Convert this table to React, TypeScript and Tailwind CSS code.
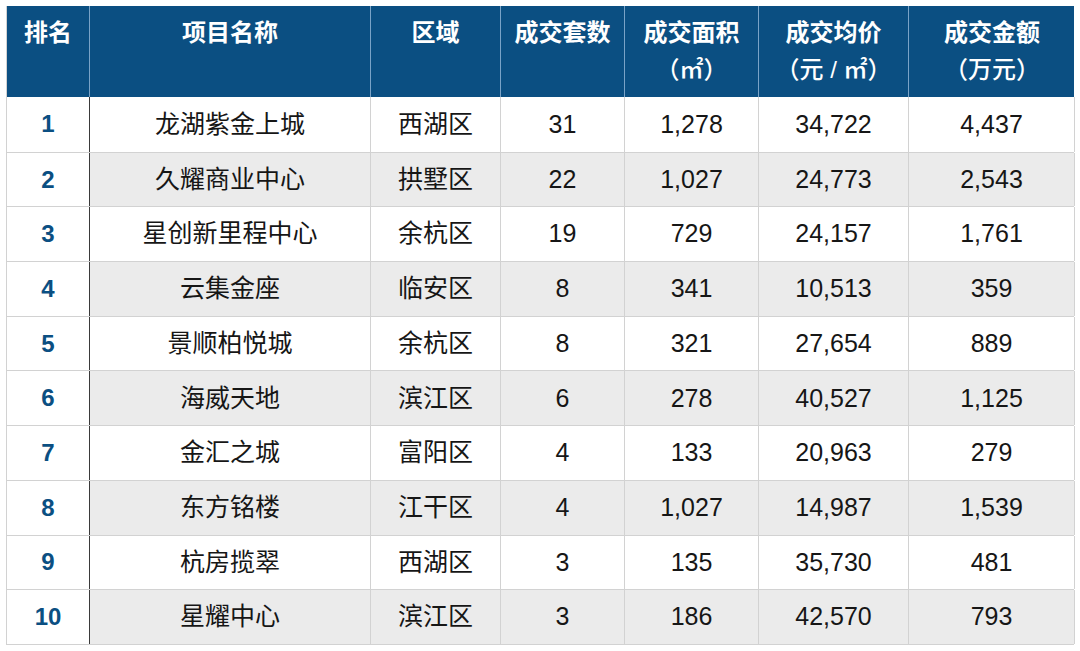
const cols = "grid grid-cols-[83px_281px_130px_124px_134px_150px_166px]";

const font = { fontFamily: '"Liberation Sans", "Noto Sans CJK SC", sans-serif' };

type Row = [string, string, string, string, string, string, string];

const rows: Row[] = [
  ["1", "龙湖紫金上城", "西湖区", "31", "1,278", "34,722", "4,437"],
  ["2", "久耀商业中心", "拱墅区", "22", "1,027", "24,773", "2,543"],
  ["3", "星创新里程中心", "余杭区", "19", "729", "24,157", "1,761"],
  ["4", "云集金座", "临安区", "8", "341", "10,513", "359"],
  ["5", "景顺柏悦城", "余杭区", "8", "321", "27,654", "889"],
  ["6", "海威天地", "滨江区", "6", "278", "40,527", "1,125"],
  ["7", "金汇之城", "富阳区", "4", "133", "20,963", "279"],
  ["8", "东方铭楼", "江干区", "4", "1,027", "14,987", "1,539"],
  ["9", "杭房揽翠", "西湖区", "3", "135", "35,730", "481"],
  ["10", "星耀中心", "滨江区", "3", "186", "42,570", "793"],
];

const headers: [string, string?][] = [
  ["排名"],
  ["项目名称"],
  ["区域"],
  ["成交套数"],
  ["成交面积", "（㎡）"],
  ["成交均价", "（元 / ㎡）"],
  ["成交金额", "（万元）"],
];

export default function App() {
  return (
    <div className="h-[651px] w-[1080px] bg-white pl-[6px] pt-[6px]" style={font}>
      <div className="w-[1068px] border-b border-l border-[#d2d2d2]">
        <div className={`${cols} h-[91px] bg-[#0b4f82]`}>
          {headers.map(([a, b], i) => (
            <div
              key={i}
              className={`flex flex-col items-center pt-[8px] text-[24px] leading-[37px] text-white ${
                i < 6 ? "border-r border-[#7aa3c7]" : ""
              }`}
            >
              <span className="font-bold">{a}</span>
              {b && <span className="font-medium">{b}</span>}
            </div>
          ))}
        </div>
        {rows.map((r, ri) => (
          <div key={ri} className={`${cols} h-[54.7px] ${ri > 0 ? "border-t border-[#d2d2d2]" : ""}`}>
            {r.map((c, ci) => (
              <div
                key={ci}
                className={`flex items-center justify-center ${
                  ci === 0
                    ? "border-r border-[#3a3a3a] bg-white text-[24px] font-bold text-[#0b4f82]"
                    : `border-r border-[#d2d2d2] text-[25px] text-[#161616] ${ri % 2 === 1 ? "bg-[#ebebeb]" : "bg-white"}`
                }`}
              >
                {c}
              </div>
            ))}
          </div>
        ))}
      </div>
    </div>
  );
}
